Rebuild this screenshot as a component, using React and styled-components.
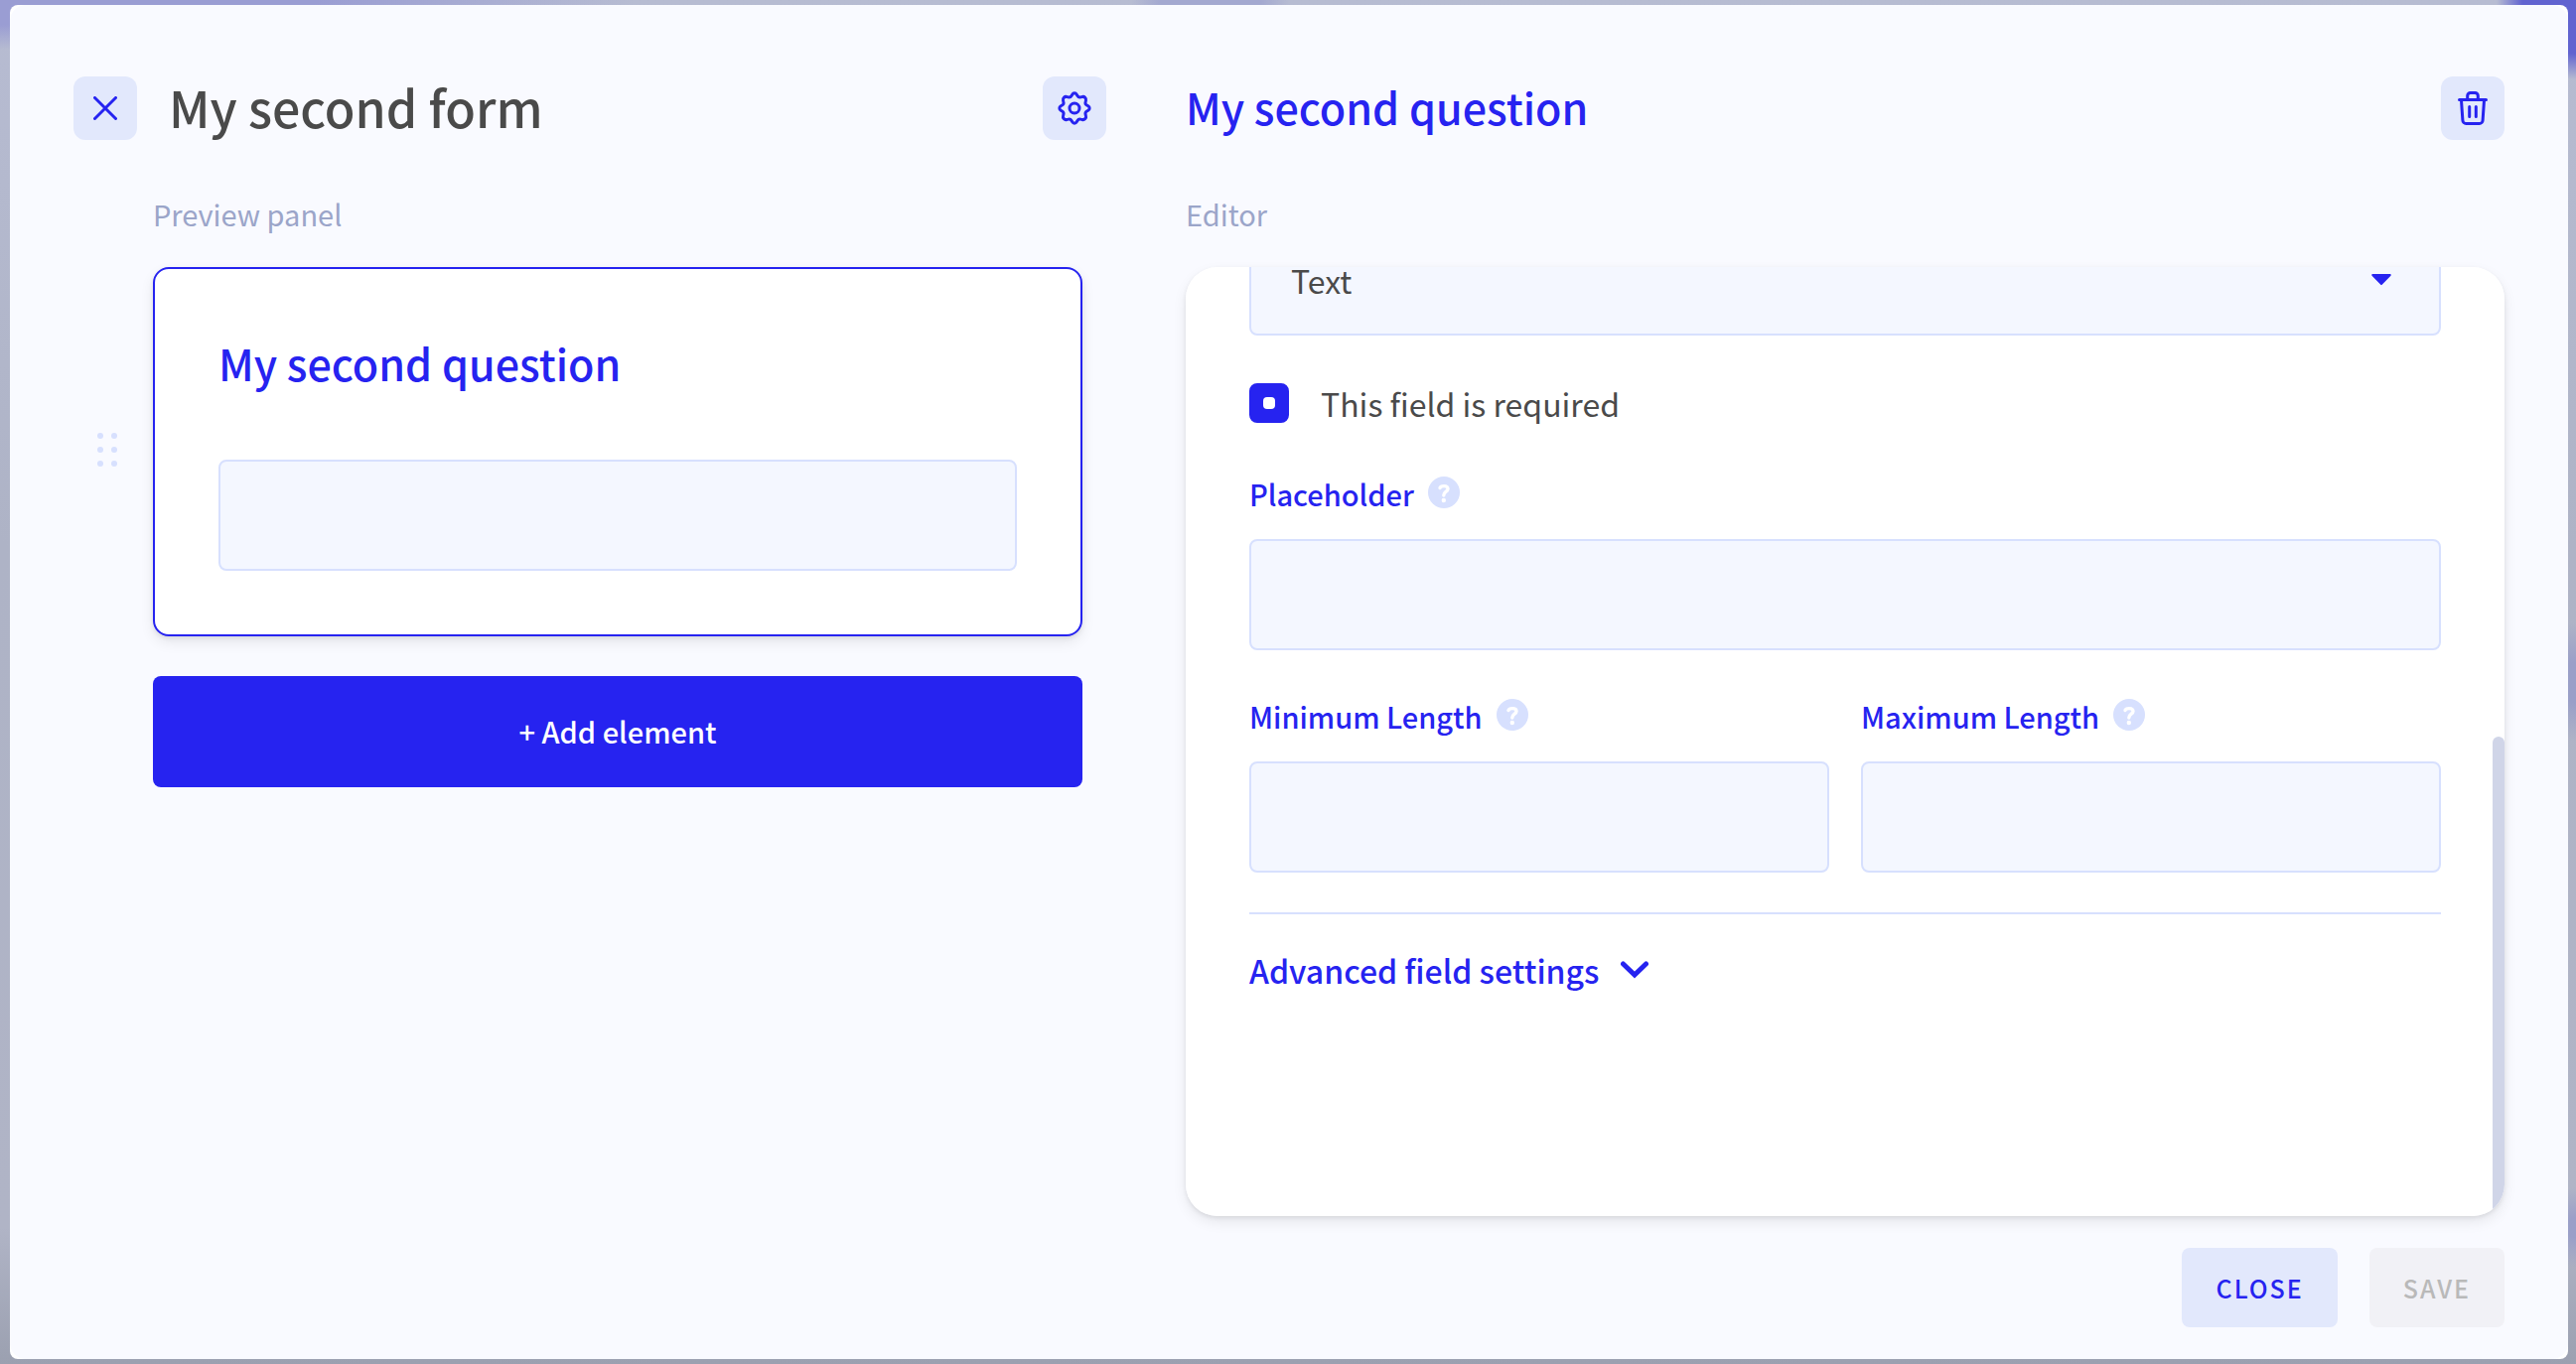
import React, { useLayoutEffect, useRef } from "react";
import styled, { ThemeProvider, createGlobalStyle } from "styled-components";

const theme = {
  colors: {
    primary: "#2623f0",
    dark: "#4a4a4a",
    muted: "#9ba5c9",
    page: "#f9faff",
    field: "#f4f7ff",
    line: "#d7e0fe",
    soft: "#e2e8fc",
    disabled: "#f1f1f6",
    disabledText: "#b9b9b9",
    scrollbar: "#d0d5e8",
    white: "#ffffff"
  },
  fonts: {
    main: '"Noto Sans CJK JP", "Noto Sans", sans-serif'
  },
  fontSizes: {
    small: "25px",
    label: "29px",
    body: "32px",
    title: "43px",
    page: "50px"
  },
  shadow: "0 2px 4px rgba(0, 0, 0, 0.08), 0 6px 14px rgba(0, 0, 0, 0.08)"
};

const GlobalStyle = createGlobalStyle`
  * {
    box-sizing: border-box;
  }

  body {
    margin: 0;
    font-family: ${theme.fonts.main};
    color: ${theme.colors.dark};
  }

  button,
  input,
  select {
    font-family: inherit;
  }
`;

const Backdrop = styled.div`
  height: 100vh;
  padding: 5px 8px 5px 10px;
  background:
    radial-gradient(circle at 100% 0, #6163d0 54px, transparent 80px),
    radial-gradient(ellipse 640px 50px at 0 0, #9a9dd3 50%, transparent),
    radial-gradient(circle at 47% 0, #a3a8d0 50px, transparent 80px),
    radial-gradient(circle at 100% 50%, #9a9fc8 20px, transparent 60px),
    radial-gradient(circle at 100% 90%, #9a9fc8 10px, transparent 40px),
    linear-gradient(to bottom, #b7bcd2, #aeb3c6 40%, #b0b4c6 90%, #9ba0b0);
`;

const Modal = styled.div`
  height: 100%;
  border-radius: 8px;
  background: ${({ theme }) => theme.colors.white};
`;

const Content = styled.div`
  display: grid;
  grid-template-columns: minmax(0, 65fr) minmax(0, 83fr);
  column-gap: 80px;
  height: 100%;
  padding: 72px 64px 32px;
  border-radius: 16px;
  background: ${({ theme }) => theme.colors.page};
`;

const Column = styled.section`
  display: flex;
  flex-direction: column;
  min-height: 0;
`;

const Header = styled.header`
  display: flex;
  align-items: center;
  gap: 32px;
  height: 64px;
`;

const PageTitle = styled.h1`
  flex: 1;
  margin: 0;
  padding-bottom: 4px;
  font-size: ${({ theme }) => theme.fontSizes.page};
  font-weight: 500;
  line-height: 60px;
`;

const QuestionTitle = styled.h2`
  flex: 1;
  margin: 0;
  padding-bottom: 4px;
  font-size: ${({ theme }) => theme.fontSizes.title};
  font-weight: 500;
  line-height: 60px;
  color: ${({ theme }) => theme.colors.primary};
`;

const IconButton = styled.button`
  display: flex;
  align-items: center;
  justify-content: center;
  width: 64px;
  height: 64px;
  padding: 0;
  border: 0;
  border-radius: 12px;
  color: ${({ theme }) => theme.colors.primary};
  background: ${({ theme }) => theme.colors.soft};
  cursor: pointer;
`;

const PanelLabel = styled.p`
  margin: 48px 0 28px;
  padding-left: ${({ $indent }) => ($indent ? "80px" : 0)};
  font-size: ${({ theme }) => theme.fontSizes.label};
  line-height: 52px;
  color: ${({ theme }) => theme.colors.muted};
`;

const PreviewRow = styled.div`
  display: grid;
  grid-template-columns: 56px minmax(0, 1fr);
  column-gap: 24px;
  align-items: center;
  padding-right: 24px;
`;

const DragHandle = styled.button`
  display: flex;
  justify-content: center;
  padding: 0 0 4px 12px;
  border: 0;
  background: none;
  color: ${({ theme }) => theme.colors.line};
  cursor: grab;
`;

const Card = styled.article`
  padding: 64px;
  border: 2px solid ${({ theme }) => theme.colors.primary};
  border-radius: 16px;
  background: ${({ theme }) => theme.colors.white};
  box-shadow: ${({ theme }) => theme.shadow};
`;

const CardLabel = styled.label`
  display: block;
  margin-bottom: 68px;
  font-size: ${({ theme }) => theme.fontSizes.title};
  font-weight: 500;
  line-height: 60px;
  color: ${({ theme }) => theme.colors.primary};
`;

const TextInput = styled.input`
  display: block;
  width: 100%;
  height: 112px;
  padding: 0 40px;
  border: 2px solid ${({ theme }) => theme.colors.line};
  border-radius: 8px;
  font-size: ${({ theme }) => theme.fontSizes.body};
  color: ${({ theme }) => theme.colors.dark};
  background: ${({ theme }) => theme.colors.field};
`;

const AddButton = styled.button`
  height: 112px;
  margin: 40px 24px 0 80px;
  padding: 0 0 2px;
  border: 0;
  border-radius: 8px;
  font-size: ${({ theme }) => theme.fontSizes.label};
  font-weight: 500;
  color: ${({ theme }) => theme.colors.white};
  background: ${({ theme }) => theme.colors.primary};
  cursor: pointer;
`;

const EditorShadow = styled.div`
  display: flex;
  flex: 1;
  min-height: 0;
  border-radius: 32px;
  box-shadow: ${({ theme }) => theme.shadow};
`;

const EditorPanel = styled.div`
  display: grid;
  grid-template-columns: minmax(0, 1fr) 12px;
  flex: 1;
  min-height: 0;
  border-radius: 32px;
  overflow: hidden;
  background: ${({ theme }) => theme.colors.white};
`;

const EditorScroll = styled.form`
  min-height: 0;
  padding: 64px 52px 0 64px;
  overflow-y: auto;
  scrollbar-width: none;
`;

const ScrollTrack = styled.div`
  display: grid;
  grid-template-rows: 50fr 51fr;
`;

const ScrollThumb = styled.div`
  grid-row: 2;
  border-radius: 6px 6px 0 0;
  background: ${({ theme }) => theme.colors.scrollbar};
`;

const SelectField = styled.div`
  display: grid;
  align-items: center;

  > * {
    grid-area: 1 / 1;
  }

  svg {
    justify-self: end;
    margin-right: 50px;
    color: ${({ theme }) => theme.colors.primary};
    pointer-events: none;
  }
`;

const Select = styled.select`
  appearance: none;
  width: 100%;
  height: 112px;
  padding: 0 40px;
  border: 2px solid ${({ theme }) => theme.colors.line};
  border-radius: 8px;
  font-size: ${({ theme }) => theme.fontSizes.body};
  color: ${({ theme }) => theme.colors.dark};
  background: ${({ theme }) => theme.colors.field};
`;

const CheckboxLabel = styled.label`
  display: flex;
  align-items: center;
  gap: 32px;
  margin: 40px 0 45px;
  font-size: ${({ theme }) => theme.fontSizes.body};
  line-height: 56px;
`;

const Checkbox = styled.input`
  appearance: none;
  display: grid;
  place-items: center;
  width: 40px;
  height: 40px;
  margin: 0;
  border: 2px solid ${({ theme }) => theme.colors.primary};
  border-radius: 8px;
  background: ${({ theme }) => theme.colors.white};

  &:checked {
    background: ${({ theme }) => theme.colors.primary};
  }

  &:checked::after {
    content: "";
    width: 12px;
    height: 12px;
    border-radius: 4px;
    background: ${({ theme }) => theme.colors.white};
  }
`;

const FieldHead = styled.div`
  display: flex;
  gap: 14px;
  height: 40px;
  margin-bottom: 24px;
  padding-top: 1px;
`;

const FieldLabel = styled.label`
  font-size: ${({ theme }) => theme.fontSizes.label};
  font-weight: 500;
  line-height: 34px;
  color: ${({ theme }) => theme.colors.primary};
`;

const HelpButton = styled.button`
  width: 32px;
  height: 32px;
  padding: 0;
  border: 0;
  border-radius: 50%;
  color: ${({ theme }) => theme.colors.white};
  background: ${({ theme }) => theme.colors.line};

  svg {
    display: block;
  }
`;

const FieldRow = styled.div`
  display: grid;
  grid-template-columns: 1fr 1fr;
  gap: 32px;
  margin-top: 48px;
  padding-bottom: 40px;
  border-bottom: 2px solid ${({ theme }) => theme.colors.line};
`;

const AdvancedButton = styled.button`
  display: flex;
  align-items: center;
  gap: 22px;
  margin: 30px 0 222px;
  padding: 0;
  border: 0;
  font-size: ${({ theme }) => theme.fontSizes.body};
  font-weight: 500;
  line-height: 52px;
  color: ${({ theme }) => theme.colors.primary};
  background: none;
  cursor: pointer;
`;

const Footer = styled.footer`
  display: flex;
  justify-content: flex-end;
  gap: 32px;
  margin-top: 32px;
`;

const FooterButton = styled.button`
  height: 80px;
  padding: 0 34px;
  border: 0;
  border-radius: 8px;
  font-size: ${({ theme }) => theme.fontSizes.small};
  font-weight: 500;
  letter-spacing: 2px;
  text-transform: uppercase;
  color: ${({ theme }) => theme.colors.primary};
  background: ${({ theme }) => theme.colors.soft};

  &:disabled {
    color: ${({ theme }) => theme.colors.disabledText};
    background: ${({ theme }) => theme.colors.disabled};
  }
`;

const CloseIcon = () => (
  <svg width="24" height="24" viewBox="0 0 24 24" fill="none">
    <path
      d="M1.5 1.5l21 21M22.5 1.5l-21 21"
      stroke="currentColor"
      strokeWidth="3"
      strokeLinecap="round"
    />
  </svg>
);

const GearIcon = () => (
  <svg
    width="34"
    height="34"
    viewBox="0 0 34 34"
    fill="none"
    stroke="currentColor"
    strokeWidth="3"
    strokeLinejoin="round"
  >
    <path d="M14.8 3.2C15.8 1.4 18.2 1.4 19.2 3.2L20 4.6C20.7 5.8 22 6.3 23.3 5.9L24.9 5.5C26.9 4.9 29.1 7.1 28.5 9.1L28.1 10.7C27.7 12 28.2 13.3 29.4 14L30.8 14.8C32.6 15.8 32.6 18.2 30.8 19.2L29.4 20C28.2 20.7 27.7 22 28.1 23.3L28.5 24.9C29.1 26.9 26.9 29.1 24.9 28.5L23.3 28.1C22 27.7 20.7 28.2 20 29.4L19.2 30.8C18.2 32.6 15.8 32.6 14.8 30.8L14 29.4C13.3 28.2 12 27.7 10.7 28.1L9.1 28.5C7.1 29.1 4.9 26.9 5.5 24.9L5.9 23.3C6.3 22 5.8 20.7 4.6 20L3.2 19.2C1.4 18.2 1.4 15.8 3.2 14.8L4.6 14C5.8 13.3 6.3 12 5.9 10.7L5.5 9.1C4.9 7.1 7.1 4.9 9.1 5.5L10.7 5.9C12 6.3 13.3 5.8 14 4.6Z" />
    <circle cx="17" cy="17" r="5" />
  </svg>
);

const TrashIcon = () => (
  <svg
    width="30"
    height="34"
    viewBox="0 0 30 34"
    fill="none"
    stroke="currentColor"
    strokeWidth="3"
    strokeLinecap="round"
    strokeLinejoin="round"
  >
    <path d="M1.5 8.5h27M9.7 8V4.5a3 3 0 0 1 3-3h4.6a3 3 0 0 1 3 3V8M3.5 9l1.4 20.2a3.4 3.4 0 0 0 3.4 3.3h13.4a3.4 3.4 0 0 0 3.4-3.3L26.5 9M11.7 15.5v10M18.3 15.5v10" />
  </svg>
);

const DragIcon = () => (
  <svg width="20" height="34" viewBox="0 0 20 34" fill="currentColor">
    {[3, 17, 31].map(y => (
      <React.Fragment key={y}>
        <circle cx="3" cy={y} r="3" />
        <circle cx="17" cy={y} r="3" />
      </React.Fragment>
    ))}
  </svg>
);

const CaretIcon = () => (
  <svg width="20" height="12" viewBox="0 0 20 12" fill="currentColor">
    <path d="M1.2 0h17.6a1 1 0 0 1 .7 1.7L10.7 10.8a1 1 0 0 1-1.4 0L.5 1.7A1 1 0 0 1 1.2 0Z" />
  </svg>
);

const ChevronIcon = () => (
  <svg width="28" height="18" viewBox="0 0 28 18" fill="none">
    <path
      d="M2.5 3L14 14L25.5 3"
      stroke="currentColor"
      strokeWidth="5"
      strokeLinecap="round"
    />
  </svg>
);

const HelpIcon = () => (
  <svg width="32" height="32" viewBox="0 0 32 32" fill="none">
    <path
      d="M12 11.6C12.5 10 14 9.6 16 9.6C18.5 9.6 20 10.8 20 12.6C20 15.3 15.8 15.2 15.8 19"
      stroke="currentColor"
      strokeWidth="3.4"
      strokeLinecap="round"
    />
    <circle cx="15.8" cy="24" r="2.2" fill="currentColor" />
  </svg>
);

const Field = ({ id, label }) => (
  <div>
    <FieldHead>
      <FieldLabel htmlFor={id}>{label}</FieldLabel>
      <HelpButton type="button" aria-label={`${label} help`}>
        <HelpIcon />
      </HelpButton>
    </FieldHead>
    <TextInput id={id} type="text" />
  </div>
);

const Preview = () => (
  <Column>
    <Header>
      <IconButton type="button" aria-label="Close form">
        <CloseIcon />
      </IconButton>
      <PageTitle>My second form</PageTitle>
      <IconButton type="button" aria-label="Form settings">
        <GearIcon />
      </IconButton>
    </Header>
    <PanelLabel $indent>Preview panel</PanelLabel>
    <PreviewRow>
      <DragHandle type="button" aria-label="Reorder question">
        <DragIcon />
      </DragHandle>
      <Card>
        <CardLabel htmlFor="preview">My second question</CardLabel>
        <TextInput id="preview" type="text" />
      </Card>
    </PreviewRow>
    <AddButton type="button">+ Add element</AddButton>
  </Column>
);

const Editor = () => {
  const scroll = useRef(null);

  useLayoutEffect(() => {
    scroll.current.scrollTop = scroll.current.scrollHeight;
  }, []);

  return (
    <Column>
      <Header>
        <QuestionTitle>My second question</QuestionTitle>
        <IconButton type="button" aria-label="Delete question">
          <TrashIcon />
        </IconButton>
      </Header>
      <PanelLabel>Editor</PanelLabel>
      <EditorShadow>
        <EditorPanel>
          <EditorScroll ref={scroll}>
            <SelectField>
              <Select aria-label="Question type" defaultValue="text">
                <option value="text">Text</option>
              </Select>
              <CaretIcon />
            </SelectField>
            <CheckboxLabel>
              <Checkbox type="checkbox" defaultChecked />
              This field is required
            </CheckboxLabel>
            <Field id="placeholder" label="Placeholder" />
            <FieldRow>
              <Field id="min-length" label="Minimum Length" />
              <Field id="max-length" label="Maximum Length" />
            </FieldRow>
            <AdvancedButton type="button">
              Advanced field settings
              <ChevronIcon />
            </AdvancedButton>
          </EditorScroll>
          <ScrollTrack>
            <ScrollThumb />
          </ScrollTrack>
        </EditorPanel>
      </EditorShadow>
      <Footer>
        <FooterButton type="button">Close</FooterButton>
        <FooterButton type="button" disabled>
          Save
        </FooterButton>
      </Footer>
    </Column>
  );
};

const App = () => (
  <ThemeProvider theme={theme}>
    <GlobalStyle />
    <Backdrop>
      <Modal role="dialog" aria-label="Form editor">
        <Content>
          <Preview />
          <Editor />
        </Content>
      </Modal>
    </Backdrop>
  </ThemeProvider>
);

export default App;
